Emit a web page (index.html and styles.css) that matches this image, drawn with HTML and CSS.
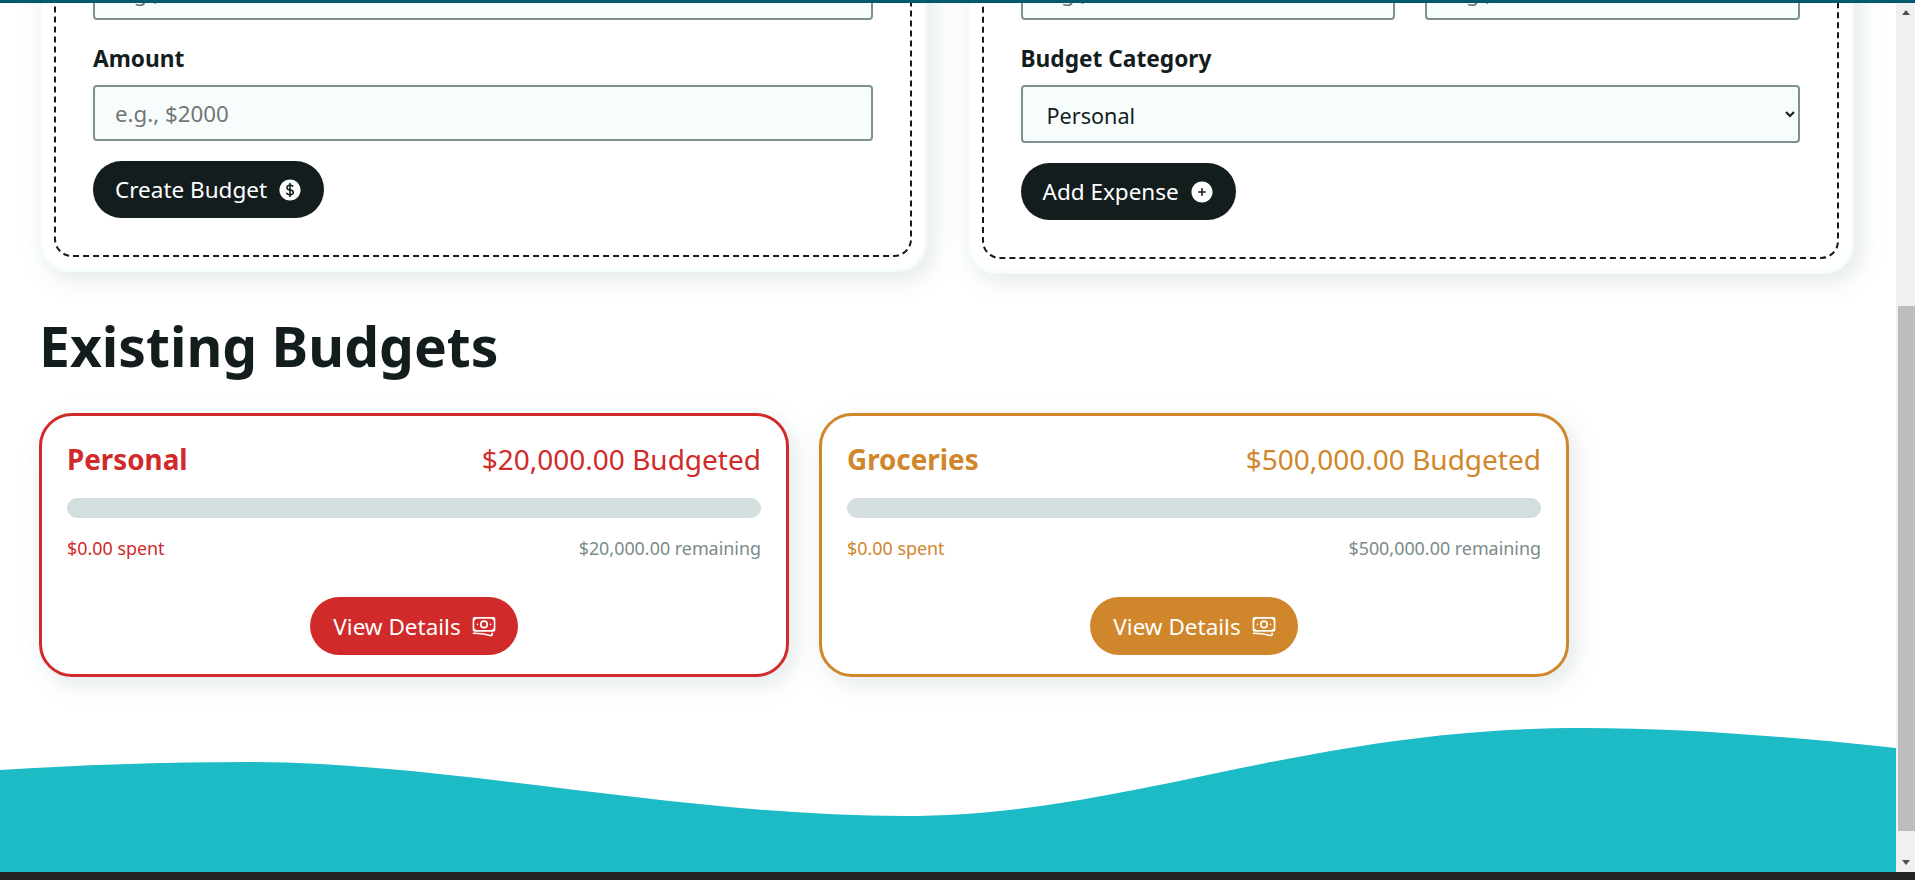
FILE: index.html
```html
<!DOCTYPE html>
<html lang="en">
<head>
    <meta charset="UTF-8"/>
    <title>HomeBudget</title>
    <link rel="stylesheet" href="styles.css">
</head>
<body>

<div class="top_line"></div>

<div class="window">
    <main class="page">
        <div class="scrolled">
            <section class="forms">
                <form class="form_card">
                    <div class="field">
                        <label>Budget Name</label>
                        <input type="text" placeholder="e.g., Groceries">
                    </div>
                    <div class="field">
                        <label>Amount</label>
                        <input type="text" placeholder="e.g., $2000">
                    </div>
                    <button type="button" class="btn btn_dark">
                        <span>Create Budget</span>
                        <svg class="icon" viewBox="0 0 24 24" fill="currentColor">
                            <path d="M10.464 8.746c.227-.18.497-.311.786-.394v2.795a2.252 2.252 0 01-.786-.393c-.394-.313-.546-.681-.546-1.004 0-.323.152-.691.546-1.004zM12.75 15.662v-2.824c.347.085.664.228.921.421.427.32.579.686.579.991 0 .305-.152.671-.579.991a2.534 2.534 0 01-.921.42z"/>
                            <path fill-rule="evenodd" clip-rule="evenodd" d="M12 2.25c-5.385 0-9.75 4.365-9.75 9.75s4.365 9.75 9.75 9.75 9.75-4.365 9.75-9.75S17.385 2.25 12 2.25zM12.75 6a.75.75 0 00-1.5 0v.816a3.836 3.836 0 00-1.72.756c-.712.566-1.112 1.35-1.112 2.178 0 .829.4 1.612 1.113 2.178.502.4 1.102.647 1.719.756v2.978a2.536 2.536 0 01-.921-.421l-.879-.66a.75.75 0 00-.9 1.2l.879.66c.533.4 1.169.645 1.821.75V18a.75.75 0 001.5 0v-.81a4.124 4.124 0 001.821-.749c.745-.559 1.179-1.344 1.179-2.191 0-.847-.434-1.632-1.179-2.191a4.122 4.122 0 00-1.821-.75V8.354c.29.082.559.213.786.393l.415.33a.75.75 0 00.933-1.175l-.415-.33a3.836 3.836 0 00-1.719-.755V6z"/>
                        </svg>
                    </button>
                </form>

                <form class="form_card">
                    <div class="field_row">
                        <div class="field">
                            <label>Expense Name</label>
                            <input type="text" placeholder="e.g., Coffee">
                        </div>
                        <div class="field">
                            <label>Amount</label>
                            <input type="text" placeholder="e.g., 3.50">
                        </div>
                    </div>
                    <div class="field">
                        <label>Budget Category</label>
                        <select>
                            <option>Personal</option>
                            <option>Groceries</option>
                        </select>
                    </div>
                    <button type="button" class="btn btn_dark">
                        <span>Add Expense</span>
                        <svg class="icon" viewBox="0 0 24 24" fill="currentColor">
                            <path fill-rule="evenodd" clip-rule="evenodd" d="M12 2.25c-5.385 0-9.75 4.365-9.75 9.75s4.365 9.75 9.75 9.75 9.75-4.365 9.75-9.75S17.385 2.25 12 2.25zM12.75 9a.75.75 0 00-1.5 0v2.25H9a.75.75 0 000 1.5h2.25V15a.75.75 0 001.5 0v-2.25H15a.75.75 0 000-1.5h-2.25V9z"/>
                        </svg>
                    </button>
                </form>
            </section>

            <h2 class="section_title">Existing Budgets</h2>

            <section class="budgets">
                <article class="budget budget_red">
                    <div class="budget_head">
                        <h3>Personal</h3>
                        <p>$20,000.00 Budgeted</p>
                    </div>
                    <div class="progress"></div>
                    <div class="budget_foot">
                        <small>$0.00 spent</small>
                        <small class="muted">$20,000.00 remaining</small>
                    </div>
                    <div class="budget_action">
                        <a class="btn btn_budget" href="#">
                            <span>View Details</span>
                            <svg class="icon" viewBox="0 0 24 24" fill="none" stroke="currentColor" stroke-width="1.5" stroke-linecap="round" stroke-linejoin="round">
                                <path d="M2.25 18.75a60.07 60.07 0 0115.797 2.101c.727.198 1.453-.342 1.453-1.096V18.75M3.75 4.5v.75A.75.75 0 013 6h-.75m0 0v-.375c0-.621.504-1.125 1.125-1.125H20.25M2.25 6v9m18-10.5v.75c0 .414.336.75.75.75h.75m-1.5-1.5h.375c.621 0 1.125.504 1.125 1.125v9.75c0 .621-.504 1.125-1.125 1.125h-.375m1.5-1.5H21a.75.75 0 00-.75.75v.75m0 0H3.75m0 0h-.375a1.125 1.125 0 01-1.125-1.125V15m1.5 1.5v-.75A.75.75 0 003 15h-.75M15 10.5a3 3 0 11-6 0 3 3 0 016 0zm3 0h.008v.008H18V10.5zm-12 0h.008v.008H6V10.5z"/>
                            </svg>
                        </a>
                    </div>
                </article>

                <article class="budget budget_amber">
                    <div class="budget_head">
                        <h3>Groceries</h3>
                        <p>$500,000.00 Budgeted</p>
                    </div>
                    <div class="progress"></div>
                    <div class="budget_foot">
                        <small>$0.00 spent</small>
                        <small class="muted">$500,000.00 remaining</small>
                    </div>
                    <div class="budget_action">
                        <a class="btn btn_budget" href="#">
                            <span>View Details</span>
                            <svg class="icon" viewBox="0 0 24 24" fill="none" stroke="currentColor" stroke-width="1.5" stroke-linecap="round" stroke-linejoin="round">
                                <path d="M2.25 18.75a60.07 60.07 0 0115.797 2.101c.727.198 1.453-.342 1.453-1.096V18.75M3.75 4.5v.75A.75.75 0 013 6h-.75m0 0v-.375c0-.621.504-1.125 1.125-1.125H20.25M2.25 6v9m18-10.5v.75c0 .414.336.75.75.75h.75m-1.5-1.5h.375c.621 0 1.125.504 1.125 1.125v9.75c0 .621-.504 1.125-1.125 1.125h-.375m1.5-1.5H21a.75.75 0 00-.75.75v.75m0 0H3.75m0 0h-.375a1.125 1.125 0 01-1.125-1.125V15m1.5 1.5v-.75A.75.75 0 003 15h-.75M15 10.5a3 3 0 11-6 0 3 3 0 016 0zm3 0h.008v.008H18V10.5zm-12 0h.008v.008H6V10.5z"/>
                            </svg>
                        </a>
                    </div>
                </article>
            </section>
        </div>

        <svg class="wave" viewBox="0 0 1896 132" preserveAspectRatio="none">
            <path d="M0 30C80 25 160 22 249 22C450 22 680 76 904 76C1130 76 1300 -12 1583 -12C1690 -12 1800 -2 1896 8V132H0Z" fill="#1cbbc6"/>
        </svg>
    </main>

    <div class="scrollbar">
        <span class="arrow arrow_up"></span>
        <div class="track">
            <div class="thumb"></div>
        </div>
        <span class="arrow arrow_down"></span>
    </div>
</div>

<div class="taskbar"></div>

</body>
</html>
```

FILE: styles.css
```css
* {
    box-sizing: border-box;
}

html, body {
    height: 100%;
}

body {
    margin: 0;
    height: 880px;
    overflow: hidden;
    display: flex;
    flex-direction: column;
    font-family: "Noto Sans", "Open Sans", sans-serif;
    color: #131d1d;
    background: #fff;
}

.top_line {
    height: 3px;
    background: #005a6b;
    flex: none;
}

.window {
    flex: 1;
    display: flex;
    min-height: 0;
}

.page {
    flex: 1;
    min-width: 0;
    display: flex;
    flex-direction: column;
    justify-content: space-between;
    overflow: hidden;
}

/* the page is scrolled down, this is the part above the fold */
.scrolled {
    margin-top: -127px;
    padding: 0 42px 0 39px;
}

.forms {
    display: grid;
    grid-template-columns: 1fr 1fr;
    gap: 40px;
    align-items: start;
}

.form_card {
    position: relative;
    display: flex;
    flex-direction: column;
    align-items: flex-start;
    gap: 20px;
    padding: 40px 51px 51px;
    background: #fff;
    border: 3px solid #f5fcfc;
    border-radius: 30px;
    box-shadow: 6px 7px 24px rgba(115, 140, 140, 0.2);
}

.form_card::before {
    content: "";
    position: absolute;
    inset: 12px;
    border: 2px dashed #131d1d;
    border-radius: 18px;
    pointer-events: none;
}

.field {
    width: 100%;
    display: flex;
    flex-direction: column;
    gap: 7px;
}

.field_row {
    width: 100%;
    display: grid;
    grid-template-columns: 1fr 1fr;
    gap: 30px;
}

label {
    font-size: 22.7px;
    font-weight: 700;
    line-height: 38px;
}

input, select {
    width: 100%;
    height: 56px;
    padding: 0 20px;
    font: inherit;
    font-size: 22.3px;
    color: #131d1d;
    background: #f7fdfd;
    border: 2px solid #7f9090;
    border-radius: 4px;
}

select {
    height: 58px;
    padding-top: 2px;
    font-size: 21.6px;
}

input::placeholder {
    color: #757575;
}

.btn {
    display: inline-flex;
    align-items: center;
    gap: 10px;
    height: 57px;
    padding: 0 21px 0 22px;
    border: 0;
    border-radius: 29px;
    font: inherit;
    font-size: 22.5px;
    color: #fff;
    text-decoration: none;
}

.btn_dark {
    background: #131d1d;
}

.icon {
    width: 26px;
    height: 26px;
    flex: none;
}

.section_title {
    margin: 39px 0 34px;
    font-size: 55.2px;
    font-weight: 700;
    line-height: 66px;
}

.budgets {
    display: flex;
    gap: 30px;
}

.budget {
    width: 750px;
    height: 264px;
    padding: 25px 25px 0;
    border: 3px solid;
    border-radius: 33px;
    background: #fff;
    box-shadow: 6px 7px 24px rgba(115, 140, 140, 0.2);
}

.budget_red {
    color: #d02a2a;
    --budget_fill: #d02a2a;
}

.budget_amber {
    color: #d0862a;
    --budget_fill: #d0862a;
}

.budget_head, .budget_foot {
    display: flex;
    justify-content: space-between;
    align-items: center;
}

.budget_head h3 {
    margin: 0;
    font-size: 27.8px;
    font-weight: 700;
    line-height: 36px;
}

.budget_head p {
    margin: 0;
    font-size: 28px;
    line-height: 36px;
}

.progress {
    height: 20px;
    margin-top: 21px;
    border-radius: 10px;
    background: #d4dede;
}

.budget_foot {
    margin-top: 18px;
}

.budget_foot small {
    font-size: 17.9px;
    line-height: 24px;
}

.muted {
    color: #7b8b8b;
}

.budget_action {
    display: flex;
    justify-content: center;
    margin-top: 37px;
}

.btn_budget {
    height: 58px;
    padding: 0 21px 0 23px;
    background: var(--budget_fill);
}

.wave {
    display: block;
    flex: none;
    width: 100%;
    height: 132px;
    overflow: visible;
}

.scrollbar {
    flex: none;
    width: 19px;
    display: flex;
    flex-direction: column;
    background: #f0f0f0;
}

.arrow {
    flex: none;
    height: 19px;
    display: flex;
    align-items: center;
    justify-content: center;
}

.arrow::before {
    content: "";
    border-left: 4px solid transparent;
    border-right: 4px solid transparent;
}

.arrow_up::before {
    border-bottom: 5px solid #505050;
}

.arrow_down::before {
    border-top: 5px solid #505050;
}

.track {
    flex: 1;
    padding-top: 284px;
    padding-left: 2px;
    padding-bottom: 22px;
    display: flex;
}

.thumb {
    flex: 1;
    background: #bdbdbd;
}

.taskbar {
    flex: none;
    height: 8px;
    background: #222324;
}
```
